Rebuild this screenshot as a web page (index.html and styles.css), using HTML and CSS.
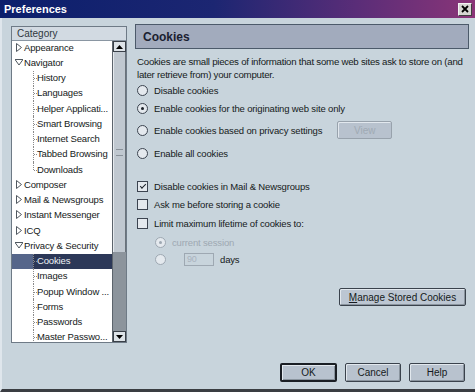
FILE: index.html
```html
<!DOCTYPE html>
<html lang="en">
<head>
  <meta charset="UTF-8" />
  <title>Preferences</title>
  <link rel="stylesheet" href="styles.css">
</head>
<body>
  <div class="window">
    <!-- Title bar -->
    <div class="titlebar">
      <span class="title">Preferences</span>
      <span class="close">
        <svg width="8" height="8" viewBox="0 0 8 8"><path d="M1 1 L7 7 M7 1 L1 7" stroke="#000" stroke-width="1.8"/></svg>
      </span>
    </div>

    <div class="content">
      <!-- Category tree -->
      <div class="tree">
        <div class="tree-head">Category</div>
        <div class="tree-body">
          <div class="tree-list">
            <div class="row"><span class="twisty closed"></span>Appearance</div>
            <div class="row"><span class="twisty open"></span>Navigator</div>
            <div class="children">
              <div class="row child">History</div>
              <div class="row child">Languages</div>
              <div class="row child">Helper Applicati...</div>
              <div class="row child">Smart Browsing</div>
              <div class="row child">Internet Search</div>
              <div class="row child">Tabbed Browsing</div>
              <div class="row child last">Downloads</div>
            </div>
            <div class="row"><span class="twisty closed"></span>Composer</div>
            <div class="row"><span class="twisty closed"></span>Mail &amp; Newsgroups</div>
            <div class="row"><span class="twisty closed"></span>Instant Messenger</div>
            <div class="row"><span class="twisty closed"></span>ICQ</div>
            <div class="row"><span class="twisty open"></span>Privacy &amp; Security</div>
            <div class="children">
              <div class="row child selected">Cookies</div>
              <div class="row child">Images</div>
              <div class="row child">Popup Window ...</div>
              <div class="row child">Forms</div>
              <div class="row child">Passwords</div>
              <div class="row child">Master Passwo...</div>
            </div>
          </div>
          <div class="scrollbar">
            <div class="sb-btn up"></div>
            <div class="sb-thumb"><span class="grip"></span></div>
            <div class="sb-track"></div>
            <div class="sb-btn down"></div>
          </div>
        </div>
      </div>

      <!-- Cookies pane -->
      <main class="pane">
        <div class="pane-head">Cookies</div>
        <p class="desc">Cookies are small pieces of information that some web sites ask to store on (and<br>later retrieve from) your computer.</p>

        <div class="opt r1"><span class="radio"></span>Disable cookies</div>
        <div class="opt r2"><span class="radio on"></span>Enable cookies for the originating web site only</div>
        <div class="opt r3"><span class="radio"></span>Enable cookies based on privacy settings<button class="btn view" disabled>View</button></div>
        <div class="opt r4"><span class="radio"></span>Enable all cookies</div>

        <div class="opt c1"><span class="check on"></span>Disable cookies in Mail &amp; Newsgroups</div>
        <div class="opt c2"><span class="check"></span>Ask me before storing a cookie</div>
        <div class="opt c3"><span class="check"></span>Limit maximum lifetime of cookies to:</div>
        <div class="opt sub s1 disabled"><span class="radio on"></span>current session</div>
        <div class="opt sub s2"><span class="radio"></span><span class="days-box">90</span>days</div>

        <div class="manage-row">
          <button class="btn manage"><u>M</u>anage Stored Cookies</button>
        </div>
      </main>
    </div>

    <div class="footer">
      <button class="btn ok">OK</button>
      <button class="btn cancel">Cancel</button>
      <button class="btn help">Help</button>
    </div>
  </div>
</body>
</html>
```

FILE: styles.css
```css
body {
  margin: 0;
  font-family: "Liberation Sans", Arial, sans-serif;
  font-size: 10px;
  color: #151a20;
  overflow: hidden;
}

.window {
  width: 475px;
  height: 392px;
  box-sizing: border-box;
  background-color: #c8d4dc;
  border-left: 2px solid #dfe6ec;
  border-bottom: 3px solid #3a3d42;
  display: flex;
  flex-direction: column;
}

/* Title bar */
.titlebar {
  height: 18px;
  margin-left: -2px;
  padding: 0 3px 0 4px;
  display: flex;
  align-items: center;
  justify-content: space-between;
  background: linear-gradient(to right, #0b1f6c 0%, #1c2672 45%, #5a2d78 75%, #8a3578 100%);
}

.title {
  color: #fff;
  font-weight: bold;
  font-size: 11px;
}

.close {
  width: 12px;
  height: 11px;
  background-color: #d6d6d2;
  border: 1px solid #f4f4f4;
  border-right-color: #404040;
  border-bottom-color: #404040;
  display: flex;
  align-items: center;
  justify-content: center;
}

.content {
  display: flex;
  gap: 8px;
  padding: 6px 6px 0 9px;
}

/* Category tree */
.tree {
  width: 116px;
  height: 317px;
  margin-top: 2px;
  box-sizing: border-box;
  border: 1px solid #6e7a86;
  display: flex;
  flex-direction: column;
}

.tree-head {
  height: 13px;
  line-height: 13px;
  padding-left: 5px;
  background-color: #d2dae2;
  border-bottom: 1px solid #8a96a2;
  color: #303840;
}

.tree-body {
  flex: 1;
  display: flex;
  overflow: hidden;
}

.tree-list {
  flex: 1;
  background-color: #fff;
  overflow: hidden;
  margin-top: -1px;
  font-size: 9.5px;
  letter-spacing: -0.15px;
}

.row {
  height: 15.25px;
  box-sizing: border-box;
  padding-bottom: 1px;
  display: flex;
  align-items: center;
  padding-left: 3px;
  white-space: nowrap;
}

.twisty {
  width: 8px;
  height: 9px;
  margin-right: 1px;
  background-repeat: no-repeat;
  background-position: center;
}

.twisty.closed {
  background-image: url("data:image/svg+xml,%3Csvg xmlns='http://www.w3.org/2000/svg' width='8' height='9'%3E%3Cpath d='M1.5 0.5 L6.5 4.5 L1.5 8.5 Z' fill='none' stroke='%23505860'/%3E%3C/svg%3E");
}

.twisty.open {
  background-image: url("data:image/svg+xml,%3Csvg xmlns='http://www.w3.org/2000/svg' width='9' height='7'%3E%3Cpath d='M0.5 0.5 L8.5 0.5 L4.5 6 Z' fill='none' stroke='%23505860'/%3E%3C/svg%3E");
}

.row.child {
  position: relative;
  padding-left: 25px;
}

.row.child::before {
  content: "";
  position: absolute;
  left: 21px;
  top: 0;
  bottom: 0;
  border-left: 1px dotted #8a8a8a;
}

.row.child.last::before {
  bottom: 50%;
}

.row.child::after {
  content: "";
  position: absolute;
  left: 22px;
  width: 3px;
  top: 50%;
  border-top: 1px dotted #8a8a8a;
}

.row.selected {
  color: #eef2f6;
  background: linear-gradient(to right, #56668a 0, #56668a 21px, #2c3858 21px);
}

/* Scrollbar */
.scrollbar {
  width: 13px;
  display: flex;
  flex-direction: column;
  background-color: #8c949c;
  border-left: 1px solid #5c646c;
}

.sb-btn {
  height: 11px;
  background-color: #dde3e8;
  border: 1px solid #3a4048;
  box-sizing: border-box;
  background-repeat: no-repeat;
  background-position: center;
}

.sb-btn.up {
  background-image: url("data:image/svg+xml,%3Csvg xmlns='http://www.w3.org/2000/svg' width='7' height='4'%3E%3Cpath d='M3.5 0 L7 4 L0 4 Z' fill='%23000'/%3E%3C/svg%3E");
}

.sb-btn.down {
  background-image: url("data:image/svg+xml,%3Csvg xmlns='http://www.w3.org/2000/svg' width='7' height='4'%3E%3Cpath d='M0 0 L7 0 L3.5 4 Z' fill='%23000'/%3E%3C/svg%3E");
}

.sb-thumb {
  height: 200px;
  background-color: #c0c8d0;
  border-left: 1px solid #e6eaee;
  border-right: 1px solid #6a727a;
  display: flex;
  align-items: center;
  justify-content: center;
}

.grip {
  width: 7px;
  height: 5px;
  border-top: 1px solid #8a929a;
  border-bottom: 1px solid #8a929a;
}

.sb-track {
  flex: 1;
}

/* Cookies pane */
.pane {
  flex: 1;
  min-width: 0;
}

.pane-head {
  height: 25px;
  box-sizing: border-box;
  border: 1px solid #4c5a6a;
  background-color: #a2abbd;
  padding-left: 7px;
  display: flex;
  align-items: center;
  font-size: 12px;
  font-weight: bold;
  color: #1a2030;
}

.desc {
  margin: 6px 0 0 2px;
  font-size: 9.7px;
  line-height: 13px;
  letter-spacing: -0.25px;
  white-space: nowrap;
}

.opt {
  height: 18px;
  display: flex;
  align-items: center;
  padding-left: 2px;
  white-space: nowrap;
  font-size: 9.5px;
  letter-spacing: -0.15px;
}

.r3 { margin-top: 4px; }
.r4 { margin-top: 5px; }
.c1 { margin-top: 15px; }
.c3 { margin-top: 1px; }
.s1 { margin-top: 1px; }
.s2 { height: 17px; }

.opt.sub {
  padding-left: 20px;
}

.radio {
  width: 9px;
  height: 9px;
  flex: none;
  border: 1px solid #3c4450;
  border-radius: 50%;
  background-color: #e4e9ee;
  margin-right: 6px;
  display: flex;
  align-items: center;
  justify-content: center;
}

.radio.on::after {
  content: "";
  width: 3px;
  height: 3px;
  border-radius: 50%;
  background-color: #1a2028;
}

.check {
  width: 9px;
  height: 9px;
  flex: none;
  border: 1px solid #3c4450;
  background-color: #e4e9ee;
  margin-right: 6px;
  display: flex;
  align-items: center;
  justify-content: center;
}

.check.on::after {
  content: "";
  width: 5px;
  height: 2px;
  margin-top: -2px;
  border-left: 1.5px solid #1a2028;
  border-bottom: 1.5px solid #1a2028;
  transform: rotate(-45deg);
}

.disabled {
  color: #9ea8b2;
}

.disabled .radio,
.s2 .radio {
  border-color: #9ea8b2;
}

.disabled .radio.on::after {
  background-color: #9ea8b2;
}

.days-box {
  width: 26px;
  height: 11px;
  margin: 0 6px 0 12px;
  border: 1px solid #9ea8b2;
  color: #a8b2bc;
  font-size: 9px;
  line-height: 11px;
  padding-left: 2px;
}

/* Buttons */
.btn {
  font-family: "Liberation Sans", Arial, sans-serif;
  font-size: 10px;
  color: #151a20;
  background-color: #b8c2ce;
  border: 1px solid #3a424c;
  border-radius: 2px;
  box-shadow: inset 1px 1px 0 #e2e8ee, inset -1px -1px 0 #8a949e;
  padding: 0;
  height: 19px;
}

.btn.view {
  width: 55px;
  height: 18px;
  margin-left: 15px;
  color: #a0aab4;
  border-color: #98a2ac;
  box-shadow: inset 1px 1px 0 #e2e8ee;
}

.manage-row {
  display: flex;
  justify-content: flex-end;
  margin-top: 20px;
  padding-right: 3px;
}

.btn.manage {
  width: 127px;
  height: 18px;
  background-color: #bcc6d2;
}

.footer {
  margin-top: auto;
  display: flex;
  justify-content: flex-end;
  gap: 8px;
  padding: 0 10px 7px 0;
}

.btn.ok {
  width: 57px;
  border: 2px solid #1a1e24;
}

.btn.cancel,
.btn.help {
  width: 56px;
}
```
